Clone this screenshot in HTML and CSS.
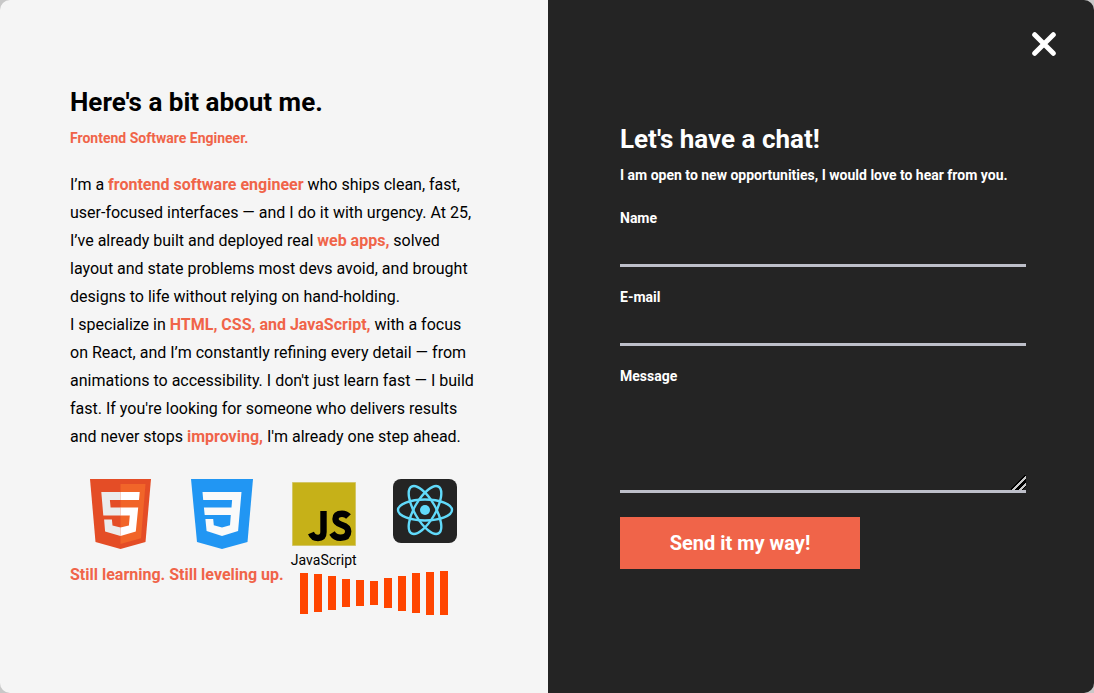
FILE: index.html
```
<!DOCTYPE html>
<html lang="en">
<head>
<meta charset="utf-8">
<meta name="viewport" content="width=device-width, initial-scale=1">
<title>About me</title>
<link rel="stylesheet" href="styles.css">
</head>
<body>
<main class="modal">
  <section class="panel about">
    <h2 class="title">Here's a bit about me.</h2>
    <h3 class="subtitle accent">Frontend Software Engineer.</h3>
    <p class="bio">I’m a <b class="accent">frontend software engineer</b> who ships clean, fast, user-focused interfaces — and I do it with urgency. At 25, I’ve already built and deployed real <b class="accent">web apps,</b> solved layout and state problems most devs avoid, and brought designs to life without relying on hand-holding.<br>I specialize in <b class="accent">HTML, CSS, and JavaScript,</b> with a focus on React, and I’m constantly refining every detail — from animations to accessibility. I don't just learn fast — I build fast. If you're looking for someone who delivers results and never stops <b class="accent">improving,</b> I'm already one step ahead.</p>
    <div class="skills">
      <figure class="skill">
        <svg width="61" height="70" viewBox="0 0 61 70" role="img" aria-label="HTML5">
          <path fill="#e44d26" d="M0 0h61l-5.500 63L30.500 70 5.500 63z"/>
          <path fill="#f16529" d="M30.500 5H55.500L51 59.200 30.500 65z"/>
          <path fill="#ebebeb" d="M30.500 13H11.300l2 23.500h17.200v-8H20.600l-.7-7.500h10.600zM30.500 48.600l-8-2.200-.6-6h-7.800l1 12.100 15.400 4.500z"/>
          <path fill="#fff" d="M30.500 13v8H49l.7-8zM30.500 28.500v8h9.300l-.9 9.900-8.400 2.200V57l15.300-4.500 2.400-24z"/>
        </svg>
      </figure>
      <figure class="skill">
        <svg width="62" height="70" viewBox="0 0 62 70" role="img" aria-label="CSS3">
          <path fill="#2196f3" d="M0 0h62l-5.500 63L31 70 6 63z"/>
          <path fill="#fafafa" d="M11.500 13h39l-3.400 39L31 57l-15.400-5-1.200-12h7.800l.6 6.200L31 48.600l8-2.400.8-10.200H13.700l-.8-7.500h27.600l.6-7.500H12.200z"/>
        </svg>
      </figure>
      <figure class="skill">
        <svg width="64" height="70" viewBox="0 0 64 70" aria-hidden="true">
          <path fill="#c6b118" stroke="#d3c667" d="M.5 3.500h63v63H.5z"/>
          <path fill="none" stroke="#000" stroke-width="6.400" d="M31.500 32v21q0 6-5.500 6-5 0-7-5M56.500 37.500q-2.500-2.800-6.500-2.800-6.500 0-6.500 5.300 0 4 6.500 6 6.200 2 6.200 6.300 0 6.500-7.700 6.500-5.500 0-8.500-4.800"/>
        </svg>
        <figcaption class="skill-name">JavaScript</figcaption>
      </figure>
      <figure class="skill">
        <svg width="64" height="64" viewBox="0 0 64 64" role="img" aria-label="React">
          <rect width="64" height="64" rx="8" fill="#242424"/>
          <circle cx="32" cy="31" r="5" fill="#61dafb"/>
          <g fill="none" stroke="#61dafb" stroke-width="2.400">
            <ellipse cx="32" cy="31" rx="27" ry="10.500"/>
            <ellipse cx="32" cy="31" rx="27" ry="10.500" transform="rotate(60 32 31)"/>
            <ellipse cx="32" cy="31" rx="27" ry="10.500" transform="rotate(120 32 31)"/>
          </g>
        </svg>
      </figure>
    </div>
    <div class="progress">
      <p class="motto accent">Still learning. Still leveling up.</p>
      <div class="wave" aria-hidden="true">
        <span class="bar" style="height:41px"></span>
        <span class="bar" style="height:38px"></span>
        <span class="bar" style="height:34px"></span>
        <span class="bar" style="height:28px"></span>
        <span class="bar" style="height:26px"></span>
        <span class="bar" style="height:24px"></span>
        <span class="bar" style="height:30px"></span>
        <span class="bar" style="height:35px"></span>
        <span class="bar" style="height:40px"></span>
        <span class="bar" style="height:43px"></span>
        <span class="bar" style="height:44px"></span>
      </div>
    </div>
  </section>
  <section class="panel contact">
    <button class="close" type="button" aria-label="Close">
      <svg width="24" height="24" viewBox="0 0 24 24" aria-hidden="true"><path fill="none" stroke="#fff" stroke-width="5" stroke-linecap="round" d="M2.700 2.700l18.600 18.600M21.300 2.700L2.700 21.300"/></svg>
    </button>
    <h2 class="title">Let's have a chat!</h2>
    <h3 class="subtitle">I am open to new opportunities, I would love to hear from you.</h3>
    <form class="form">
      <div class="field">
        <label for="name">Name</label>
        <input class="input" id="name" name="name" type="text">
      </div>
      <div class="field">
        <label for="email">E-mail</label>
        <input class="input" id="email" name="email" type="email">
      </div>
      <div class="field">
        <label for="message">Message</label>
        <textarea class="input message" id="message" name="message"></textarea>
      </div>
      <button class="submit" type="submit">Send it my way!</button>
    </form>
  </section>
</main>
</body>
</html>
```
FILE: styles.css
```
* {
  box-sizing: border-box;
  margin: 0;
}

body {
  background: #c8c8c8;
  color: #000;
  font-family: Roboto, "Liberation Sans", sans-serif;
  font-size: 16px;
}

.modal {
  display: flex;
  min-height: 100vh;
  border-radius: 10px;
  overflow: hidden;
}

.panel {
  display: flex;
  flex: 1;
  flex-direction: column;
  justify-content: center;
}

.about {
  padding: 8px 72px 0 70px;
  background: #f5f5f5;
}

.contact {
  position: relative;
  padding: 0 68px 2px 72px;
  background: #242424;
  color: #fff;
}

.title {
  font-size: 26px;
  font-weight: 700;
  line-height: 32px;
}

.subtitle {
  margin-top: 10px;
  font-size: 14px;
  font-weight: 700;
  line-height: 20px;
}

.accent {
  color: #f06449;
}

.bio {
  margin-top: 23px;
  line-height: 28px;
}

.bio .accent {
  font-weight: 700;
}

.skills {
  display: grid;
  grid-template-columns: repeat(4, 1fr);
  margin-top: 28px;
}

.skill {
  position: relative;
  display: flex;
  justify-content: center;
  align-items: flex-start;
}

.skill-name {
  position: absolute;
  top: 71px;
  font-size: 14px;
  line-height: 20px;
}

.progress {
  display: flex;
  gap: 16px;
  margin-top: 12px;
}

.motto {
  font-weight: 700;
  line-height: 28px;
}

.wave {
  display: flex;
  align-items: center;
  gap: 6px;
  margin-top: 10px;
}

.bar {
  width: 8px;
  background: #ff4500;
}

.close {
  position: absolute;
  top: 32px;
  right: 38px;
  display: flex;
  padding: 0;
  border: 0;
  background: none;
  cursor: pointer;
}

.form {
  display: flex;
  flex-direction: column;
  gap: 20px;
  margin-top: 23px;
}

.field {
  display: flex;
  flex-direction: column;
  font-size: 14px;
  font-weight: 700;
  line-height: 20px;
}

.input {
  width: 100%;
  height: 39px;
  padding: 0;
  border: 0;
  border-bottom: 3px solid #bdbfc9;
  border-radius: 0;
  outline: 0;
  background: transparent;
  color: #fff;
  font: inherit;
}

.message {
  height: 107px;
  resize: vertical;
}

.message::-webkit-resizer {
  background: linear-gradient(135deg, transparent 46%, #000 46% 52%, #c8c8c8 52% 62%, #000 62% 76%, #c8c8c8 76% 84%, #000 84% 88%, transparent 88%);
}

.submit {
  align-self: flex-start;
  width: 240px;
  height: 52px;
  margin-top: 4px;
  border: 0;
  background: #f06449;
  color: #fff;
  font: 700 20px Roboto, "Liberation Sans", sans-serif;
  cursor: pointer;
}
```
